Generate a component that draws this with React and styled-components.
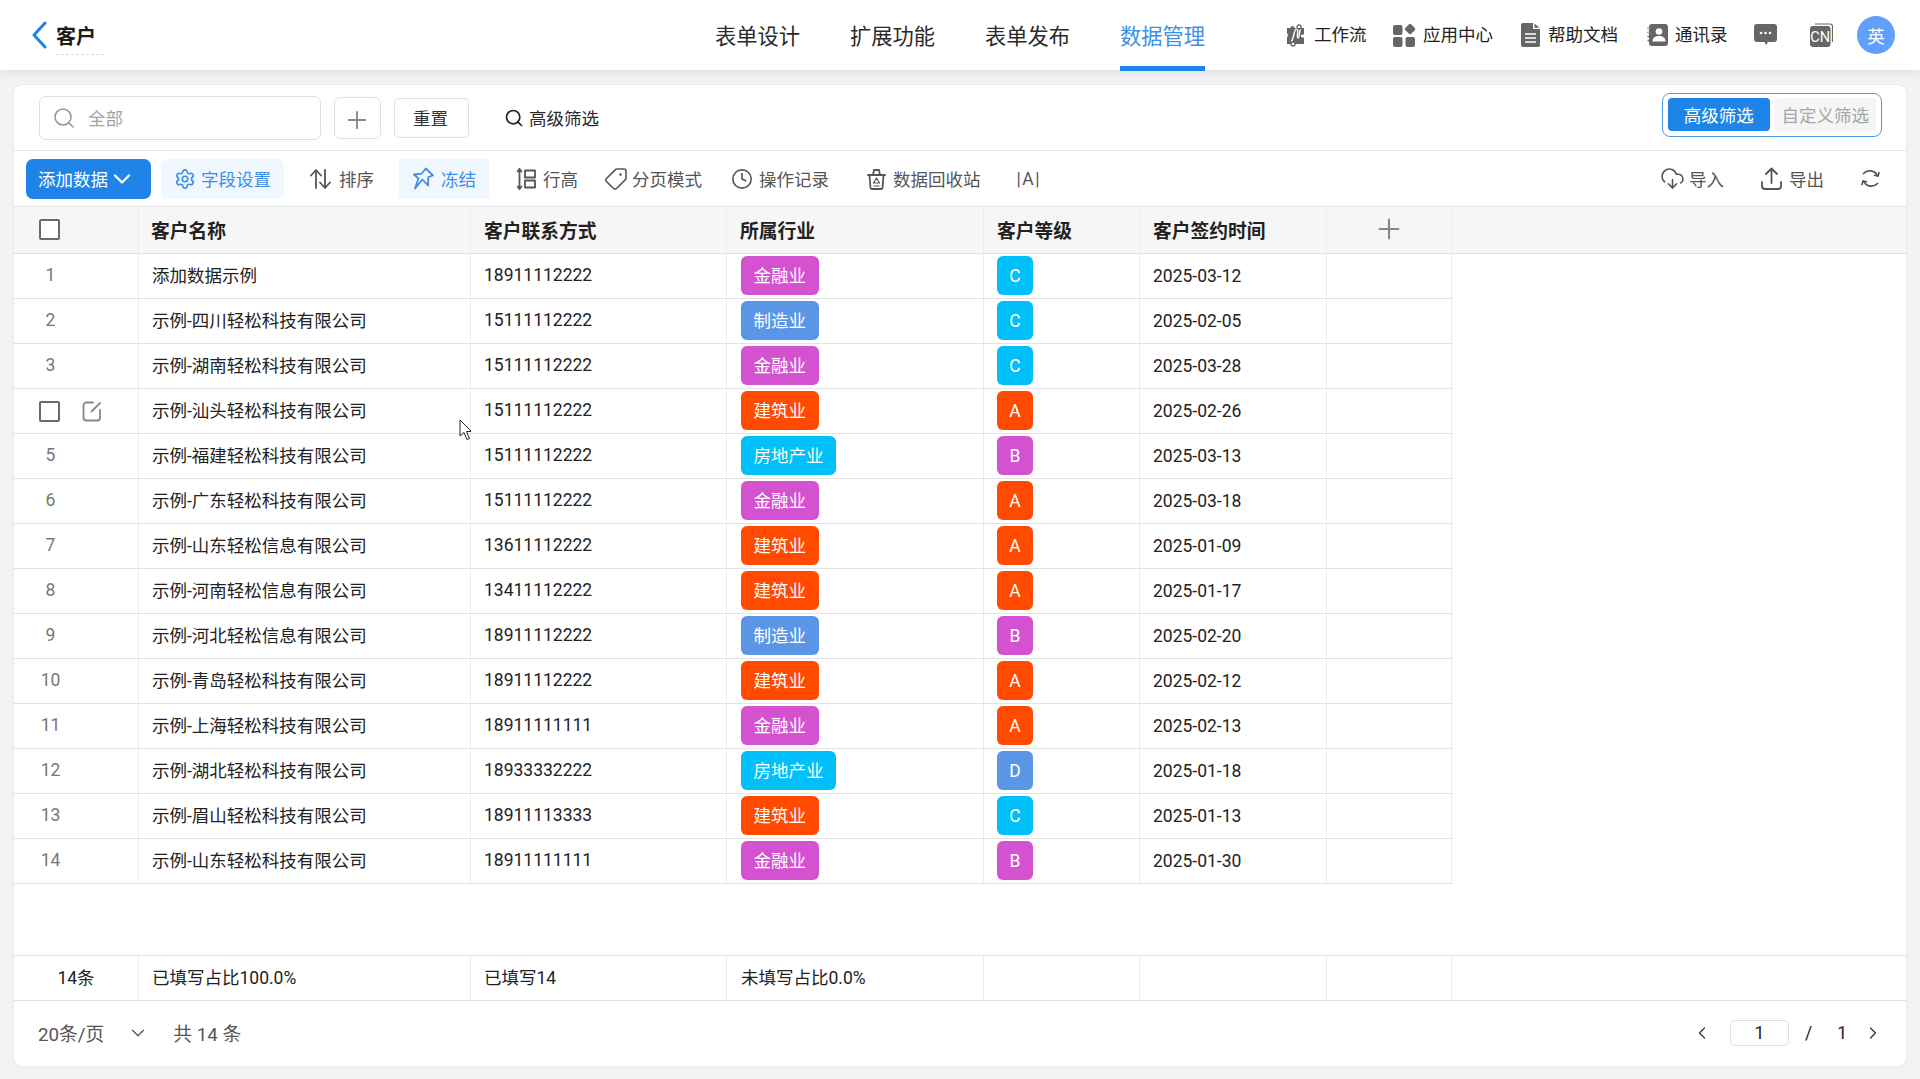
import React from 'react';
import styled, { createGlobalStyle, css } from 'styled-components';
import { ChevronLeft, ChevronRight, ChevronDown, Search, Plus, Settings, Tag, Clock, CloudDownload } from 'lucide-react';

const Global = createGlobalStyle`
  * { box-sizing: border-box; }
  html, body { margin: 0; padding: 0; height: 100%; }
  body { font-family: Roboto, "Noto Sans CJK SC", sans-serif; font-size: 17.5px; color: #222; background: #f2f3f3; overflow: hidden; }
`;

const Page = styled.div`
  position: relative;
  height: 100vh;
  display: flex;
  flex-direction: column;
`;

const Header = styled.header`
  height: 70px;
  flex: none;
  background: #fff;
  display: flex;
  align-items: center;
  box-shadow: 0 2px 10px rgba(60, 70, 80, 0.12);
  position: relative;
  z-index: 2;
`;

const TitleArea = styled.div`
  width: 715px;
  flex: none;
  padding-left: 31px;
  display: flex;
  align-items: center;
  gap: 9px;
`;

const Title = styled.span`
  font-size: 20px;
  font-weight: 700;
  color: #1c1c1c;
  width: 48px;
  height: 36px;
  line-height: 36px;
  margin-top: 4px;
  border-bottom: 1px dashed #ddd;
`;

const Tabs = styled.nav`
  display: flex;
  gap: 50px;
  height: 70px;
  flex: none;
`;

const TabItem = styled.a`
  position: relative;
  font-size: 21.25px;
  line-height: 74px;
  height: 71px;
  color: ${p => (p.$active ? '#3d8fe8' : '#2a2a2a')};
  border-bottom: ${p => (p.$active ? '5px solid #1e84e8' : '0')};
`;

const NavRight = styled.div`
  margin-left: 81px;
  display: flex;
  align-items: center;
  height: 70px;
`;

const NavLink = styled.div`
  display: flex;
  align-items: center;
  gap: ${p => p.$gap || 8}px;
  margin-right: ${p => p.$mr || 0}px;
  color: #222;
  font-size: 17.5px;
  line-height: 24px;
`;

const Avatar = styled.div`
  width: 38px;
  height: 38px;
  margin-left: 24px;
  border-radius: 50%;
  background: #609ffb;
  color: #fff;
  display: flex;
  align-items: center;
  justify-content: center;
  font-size: 17.5px;
`;

const Card = styled.main`
  flex: 1;
  min-height: 0;
  margin: 14px 13px 12px 13px;
  background: #fff;
  border: 1px solid #e8e9ea;
  border-radius: 9px;
  display: flex;
  flex-direction: column;
  overflow: hidden;
`;

const FilterRow = styled.div`
  height: 66px;
  flex: none;
  border-bottom: 1px solid #e6e6e6;
  display: flex;
  align-items: center;
  padding: 0 24px 0 25px;
`;

const SearchBox = styled.div`
  width: 282px;
  height: 44px;
  border: 1px solid #dcdfe6;
  border-radius: 7px;
  display: flex;
  align-items: center;
  padding-left: 12px;
  gap: 12px;
  color: #a3a3a3;
  font-size: 17.5px;
`;

const SquareBtn = styled.button`
  width: 47px;
  height: 42px;
  margin-left: 13px;
  background: #fff;
  border: 1px solid #dcdfe6;
  border-radius: 6px;
  display: flex;
  align-items: center;
  justify-content: center;
  color: #888;
  padding: 4px 1px 0 0;
`;

const ResetBtn = styled.button`
  width: 75px;
  height: 40px;
  margin-left: 13px;
  background: #fff;
  border: 1px solid #dcdfe6;
  border-radius: 5px;
  font: inherit;
  color: #333;
  padding: 0 2px 0 0;
`;

const AdvLink = styled.div`
  margin-left: 35px;
  display: flex;
  align-items: center;
  gap: 5px;
  color: #2a2a2a;
`;

const FilterSwitch = styled.div`
  margin-left: auto;
  margin-top: -6px;
  width: 220px;
  height: 44px;
  border: 1px solid #4a9bea;
  border-radius: 8px;
  display: flex;
  align-items: center;
  gap: 5px;
  padding: 0 5px;
`;

const SwitchItem = styled.div`
  flex: 1;
  height: 33px;
  border-radius: 4px;
  display: flex;
  align-items: center;
  justify-content: center;
  background: ${p => (p.$active ? '#1e84e8' : '#f5f5f5')};
  color: ${p => (p.$active ? '#fff' : '#a6a6a6')};
`;

const Toolbar = styled.div`
  height: 56px;
  flex: none;
  border-bottom: 1px solid #e6e6e6;
  display: flex;
  align-items: center;
  padding: 0 25px 0 12px;
`;

const AddBtn = styled.button`
  width: 125px;
  height: 40px;
  border: 0;
  border-radius: 7px;
  background: #1e84e8;
  color: #fff;
  font: inherit;
  display: flex;
  align-items: center;
  padding: 0 0 0 12px;
`;

const ToolItem = styled.div`
  height: 40px;
  padding: 0 ${p => p.$pr ?? 14}px 0 ${p => p.$pl ?? 14}px;
  margin-left: ${p => p.$ml || 0}px;
  display: flex;
  align-items: center;
  gap: ${p => p.$gap || 7}px;
  color: ${p => (p.$on ? '#3d8fe8' : '#555')};
  background: ${p => (p.$on ? '#f0f7ff' : 'transparent')};
  border-radius: ${p => p.$radius || 0}px;
`;

const Spaced = styled.span`
  letter-spacing: 1.5px;
`;

const ToolRight = styled.div`
  margin-left: auto;
  display: flex;
  align-items: center;
`;

const RightItem = styled.div`
  display: flex;
  align-items: center;
  gap: ${p => p.$gap || 5}px;
  margin-left: ${p => p.$ml || 0}px;
  color: #555;
`;

const colTemplate = css`
  display: grid;
  grid-template-columns: 125px 332px 256px 257px 156px 187px 125px;
`;

const HeadRow = styled.div`
  ${colTemplate}
  flex: none;
  height: 47px;
  background: #f6f6f6;
  border-bottom: 1px solid #e2e2e2;
`;

const Cell = styled.div`
  display: flex;
  align-items: center;
  padding-left: ${p => p.$pad ?? 13}px;
  padding-bottom: ${p => p.$up || 0}px;
  border-right: 1px solid #ececec;
  min-width: 0;
`;

const HeadCell = styled(Cell)`
  padding-bottom: 2px;
  font-size: 18.75px;
  font-weight: 700;
  color: #222;
`;

const AddCell = styled(Cell)`
  justify-content: center;
  padding-left: 0;
  padding-bottom: 2px;
  color: #888;
`;

const Body = styled.div`
  flex: 1;
  min-height: 0;
`;

const Row = styled.div`
  ${colTemplate}
  width: 1438px;
  height: 45px;
  border-bottom: 1px solid #e2e2e2;
`;

const IndexCell = styled(Cell)`
  padding: 0 51px 2px 0;
  justify-content: center;
  color: #777;
`;

const HoverCell = styled(Cell)`
  padding-left: 25px;
  gap: 22px;
  color: #888;
`;

const Check = styled.span`
  width: 21px;
  height: 21px;
  display: block;
  flex: none;
  border: 2px solid #6a6a6a;
  border-radius: 2px;
  background: #fff;
`;

const Badge = styled.span`
  height: 39px;
  min-width: ${p => (p.$small ? '36px' : '0')};
  padding: 0 ${p => (p.$small ? 0 : 12.5)}px ${p => (p.$small ? 0 : 2)}px;
  border-radius: 6px;
  color: #fff;
  background: ${p => p.$bg};
  display: inline-flex;
  align-items: center;
  justify-content: center;
`;

const SummaryRow = styled.div`
  ${colTemplate}
  flex: none;
  height: 46px;
  border-top: 1px solid #e2e2e2;
  border-bottom: 1px solid #e2e2e2;
  color: #222;
`;

const SummaryCount = styled(Cell)`
  padding-left: 0;
  padding-bottom: 3px;
  justify-content: center;
`;

const Pager = styled.footer`
  flex: none;
  height: 65px;
  display: flex;
  align-items: center;
  padding: 0 23px 2px 24px;
  color: #555;
  font-size: 18.75px;
`;

const PageSize = styled.div`
  display: flex;
  align-items: center;
  gap: 23px;
  margin-right: 24px;
`;

const PagerRight = styled.div`
  margin-left: auto;
  display: flex;
  align-items: center;
  color: #333;
  font-size: 17.5px;
`;

const PageInput = styled.div`
  width: 59px;
  height: 26px;
  margin: 0 16px 0 18px;
  border: 1px solid #dcdfe6;
  border-radius: 5px;
  display: flex;
  align-items: center;
  justify-content: center;
  color: #222;
`;

const PageNum = styled.span`
  color: #222;
  margin: ${p => p.$m};
`;

const Cursor = styled.svg`
  position: absolute;
  left: 459px;
  top: 419px;
  z-index: 5;
`;

const Ico = ({ s = 20, children, vb = '0 0 24 24', w, h }) => (
  <svg width={w || s} height={h || s} viewBox={vb} fill="none" stroke="currentColor" strokeWidth="1.8" strokeLinecap="round" strokeLinejoin="round">{children}</svg>
);

const G = '#666';

const BackIcon = () => (
  <svg width="16" height="28" viewBox="0 0 16 28" fill="none" stroke="#1e84e8" strokeWidth="3" strokeLinecap="round" strokeLinejoin="round"><path d="M14 2L3 14l11 12" /></svg>
);
const WorkflowIcon = () => (
  <svg width="19" height="24" viewBox="0 0 19 24">
    <path d="M1 5h3.5a2 2 0 0 1 4 0H18v6.5h-1.5a1.5 1.5 0 0 0 0 3H18V21H9a2 2 0 0 1-4 0H1v-7a2 2 0 0 0 0-3.5z" fill={G} />
    <path d="M5 18c3 0 2.500-12 5.500-12S10 15 12 15s1-9 3-9" fill="none" stroke="#fff" strokeWidth="1.4" />
    <circle cx="7" cy="21" r="2" fill="#fff" stroke={G} strokeWidth="1.3" />
    <circle cx="13" cy="4" r="2" fill="#fff" stroke={G} strokeWidth="1.3" />
  </svg>
);
const AppsIcon = () => (
  <svg width="24" height="24" viewBox="0 0 24 24">
    <rect x="1" y="2" width="9.500" height="10" rx="2" fill={G} />
    <rect x="1" y="14" width="9.500" height="10" rx="2" fill={G} />
    <rect x="13.500" y="14" width="9.500" height="10" rx="2" fill={G} />
    <rect x="14" y="2" width="8.200" height="8.200" rx="1.500" transform="rotate(45 18.100 6.100)" fill={G} />
  </svg>
);
const DocIcon = () => (
  <svg width="19" height="24" viewBox="0 0 19 24">
    <path d="M2 0h10v6h7v16a2 2 0 0 1-2 2H2a2 2 0 0 1-2-2V2a2 2 0 0 1 2-2z" fill={G} />
    <path d="M13.500 0.500L18.500 4.700H13.500z" fill={G} />
    <path d="M4 11h11M4 15h11M4 19h11" stroke="#fff" strokeWidth="1.6" />
  </svg>
);
const ContactIcon = () => (
  <svg width="21" height="24" viewBox="0 0 21 24">
    <rect x="2" y="1" width="19" height="22" rx="3" fill={G} />
    <path d="M0.500 5.500h3M0.500 9.500h3M0.500 13.500h3M0.500 17.500h3" stroke={G} strokeWidth="1.500" />
    <path d="M0.800 5.500h2M0.800 9.500h2" stroke="#fff" strokeWidth="0.500" />
    <circle cx="12" cy="8.500" r="3.300" fill="#fff" />
    <path d="M5.500 18.500c0-4 3-5.500 6.500-5.500s6.500 1.500 6.500 5.500z" fill="#fff" />
  </svg>
);
const MsgIcon = () => (
  <svg width="23" height="22" viewBox="0 0 23 22">
    <path d="M3 0h17a3 3 0 0 1 3 3v12a3 3 0 0 1-3 3h-6l-2 3-1.500-3H3a3 3 0 0 1-3-3V3a3 3 0 0 1 3-3z" fill={G} />
    <circle cx="7" cy="9" r="1.300" fill="#fff" />
    <circle cx="11.500" cy="9" r="1.300" fill="#fff" />
    <circle cx="16" cy="9" r="1.300" fill="#fff" />
  </svg>
);
const CnIcon = () => (
  <svg width="23" height="24" viewBox="0 0 23 24">
    <path d="M5 1h15a2.500 2.500 0 0 1 2.500 2.500V19" fill="none" stroke={G} strokeWidth="1.200" />
    <rect x="0" y="3" width="20.500" height="21" rx="3" fill={G} />
    <text x="10.200" y="19" textAnchor="middle" fontSize="14.500" fontFamily="Roboto, sans-serif" fill="#fff">CN</text>
  </svg>
);
const SortIcon = () => (
  <Ico w={23} h={22} vb="0 0 23 22"><path d="M7 20V2.500M2 7.500l5-5.500 5 5.500" /><path d="M16 2v17.500M11 14.500l5 5.500 5-5.500" /></Ico>
);
const PinIcon = () => (
  <Ico w={21} h={23} vb="0 0 21 23"><path d="M12.800 1.500L20 8.500l-4.700 1.500-.3 8.500-5.500-6-7.500 9 3.500-10L1 7.500l7.500-.8z" /></Ico>
);
const LineHeightIcon = () => (
  <Ico w={19} h={24} vb="0 0 19 24"><path d="M2.500 2v20M0.500 4.500l2-2.500 2 2.500M0.500 19.500l2 2.500 2-2.500" /><rect x="8" y="3.500" width="10" height="7" /><rect x="8" y="13.500" width="10" height="7" /></Ico>
);
const BinIcon = () => (
  <Ico w={19} h={22} vb="0 0 19 22"><path d="M1 7h17M6 7l1-5h5l1 5" /><path d="M2.500 7l1 13a1.500 1.500 0 0 0 1.500 1h9a1.500 1.500 0 0 0 1.500-1l1-13" /><path d="M9.500 10l-3 5h6zM7 18h5" strokeWidth="1.200" /></Ico>
);
const UploadIcon = () => (
  <Ico w={21} h={23} vb="0 0 21 23"><path d="M10.500 16V2M5 7l5.500-5.500L16 7" /><path d="M1 15v4a3 3 0 0 0 3 3h13a3 3 0 0 0 3-3v-4" /></Ico>
);
const RefreshIcon = () => (
  <Ico w={21} h={21} vb="0 0 21 21"><path d="M3.500 5.500a8.500 8.500 0 0 1 14 2.500" /><path d="M17.500 15.500a8.500 8.500 0 0 1-14-2.500" /><path d="M19 4.500L18 8l-3.500-.8M2 16.500L3 13l3.500.8" strokeWidth="1.600" /></Ico>
);
const EditIcon = () => (
  <Ico w={20} h={22} vb="0 0 20 22"><path d="M11 2.500H4.500a3 3 0 0 0-3 3v12a3 3 0 0 0 3 3h10.500a3 3 0 0 0 3-3V10" /><path d="M9.500 11.500L18 3" /></Ico>
);

const IND = {
  金融业: '#d452cf',
  制造业: '#5b96e6',
  建筑业: '#ff4a00',
  房地产业: '#00bff9',
};
const LVL = { A: '#ff4a00', B: '#d452cf', C: '#00bff9', D: '#5b96e6' };

const rows = [
  ['添加数据示例', '18911112222', '金融业', 'C', '2025-03-12'],
  ['示例-四川轻松科技有限公司', '15111112222', '制造业', 'C', '2025-02-05'],
  ['示例-湖南轻松科技有限公司', '15111112222', '金融业', 'C', '2025-03-28'],
  ['示例-汕头轻松科技有限公司', '15111112222', '建筑业', 'A', '2025-02-26'],
  ['示例-福建轻松科技有限公司', '15111112222', '房地产业', 'B', '2025-03-13'],
  ['示例-广东轻松科技有限公司', '15111112222', '金融业', 'A', '2025-03-18'],
  ['示例-山东轻松信息有限公司', '13611112222', '建筑业', 'A', '2025-01-09'],
  ['示例-河南轻松信息有限公司', '13411112222', '建筑业', 'A', '2025-01-17'],
  ['示例-河北轻松信息有限公司', '18911112222', '制造业', 'B', '2025-02-20'],
  ['示例-青岛轻松科技有限公司', '18911112222', '建筑业', 'A', '2025-02-12'],
  ['示例-上海轻松科技有限公司', '18911111111', '金融业', 'A', '2025-02-13'],
  ['示例-湖北轻松科技有限公司', '18933332222', '房地产业', 'D', '2025-01-18'],
  ['示例-眉山轻松科技有限公司', '18911113333', '建筑业', 'C', '2025-01-13'],
  ['示例-山东轻松科技有限公司', '18911111111', '金融业', 'B', '2025-01-30'],
];

export default function App() {
  return (
    <Page>
      <Global />
      <Header>
        <TitleArea>
          <BackIcon />
          <Title>客户</Title>
        </TitleArea>
        <Tabs>
          <TabItem>表单设计</TabItem>
          <TabItem>扩展功能</TabItem>
          <TabItem>表单发布</TabItem>
          <TabItem $active>数据管理</TabItem>
        </Tabs>
        <NavRight>
          <NavLink $mr={25.5} $gap={9}><WorkflowIcon />工作流</NavLink>
          <NavLink $mr={28} $gap={7}><AppsIcon />应用中心</NavLink>
          <NavLink $mr={29}><DocIcon />帮助文档</NavLink>
          <NavLink $mr={26.5} $gap={7}><ContactIcon />通讯录</NavLink>
          <NavLink $mr={33}><MsgIcon /></NavLink>
          <NavLink><CnIcon /></NavLink>
          <Avatar>英</Avatar>
        </NavRight>
      </Header>
      <Card>
        <FilterRow>
          <SearchBox><Search size={24} color="#999" strokeWidth={1.6} />全部</SearchBox>
          <SquareBtn><Plus size={28} strokeWidth={1.6} /></SquareBtn>
          <ResetBtn>重置</ResetBtn>
          <AdvLink><Search size={20} color="#222" strokeWidth={2} />高级筛选</AdvLink>
          <FilterSwitch>
            <SwitchItem $active>高级筛选</SwitchItem>
            <SwitchItem>自定义筛选</SwitchItem>
          </FilterSwitch>
        </FilterRow>
        <Toolbar>
          <AddBtn>添加数据<ChevronDown size={28} strokeWidth={2} /></AddBtn>
          <ToolItem $ml={10} $on $radius={7} $pl={13} $pr={13} $gap={5}><Settings size={22} strokeWidth={1.8} />字段设置</ToolItem>
          <ToolItem $ml={11}><SortIcon />排序</ToolItem>
          <ToolItem $ml={11} $on $pr={13}><PinIcon />冻结</ToolItem>
          <ToolItem $ml={14}><LineHeightIcon />行高</ToolItem>
          <ToolItem $gap={4} $pl={12} $pr={16}><Tag size={24} strokeWidth={1.6} style={{ transform: 'scaleX(-1)' }} />分页模式</ToolItem>
          <ToolItem $gap={6} $pl={13}><Clock size={22} strokeWidth={1.8} />操作记录</ToolItem>
          <ToolItem $ml={10} $gap={7}><BinIcon />数据回收站</ToolItem>
          <ToolItem $ml={8}><Spaced>|A|</Spaced></ToolItem>
          <ToolRight>
            <RightItem $gap={4}><CloudDownload size={25} strokeWidth={1.5} />导入</RightItem>
            <RightItem $ml={37} $gap={7}><UploadIcon />导出</RightItem>
            <RightItem $ml={36}><RefreshIcon /></RightItem>
          </ToolRight>
        </Toolbar>
        <HeadRow>
          <HeadCell $pad={25}><Check /></HeadCell>
          <HeadCell $pad={12}>客户名称</HeadCell>
          <HeadCell $pad={13}>客户联系方式</HeadCell>
          <HeadCell $pad={13}>所属行业</HeadCell>
          <HeadCell $pad={13}>客户等级</HeadCell>
          <HeadCell $pad={13}>客户签约时间</HeadCell>
          <AddCell><Plus size={32} strokeWidth={1.6} /></AddCell>
        </HeadRow>
        <Body>
          {rows.map((r, i) => (
            <Row key={i}>
              {i === 3 ? (
                <HoverCell><Check /><EditIcon /></HoverCell>
              ) : (
                <IndexCell>{i + 1}</IndexCell>
              )}
              <Cell $pad={13} $up={4}>{r[0]}</Cell>
              <Cell $up={2}>{r[1]}</Cell>
              <Cell $pad={14} $up={1}><Badge $bg={IND[r[2]]}>{r[2]}</Badge></Cell>
              <Cell $pad={13} $up={1}><Badge $small $bg={LVL[r[3]]}>{r[3]}</Badge></Cell>
              <Cell $pad={13}>{r[4]}</Cell>
              <Cell />
            </Row>
          ))}
        </Body>
        <SummaryRow>
          <SummaryCount>14条</SummaryCount>
          <Cell $pad={13} $up={3}>已填写占比100.0%</Cell>
          <Cell $up={3}>已填写14</Cell>
          <Cell $pad={14} $up={3}>未填写占比0.0%</Cell>
          <Cell />
          <Cell />
          <Cell />
        </SummaryRow>
        <Pager>
          <PageSize>20条/页<ChevronDown size={22} strokeWidth={1.4} /></PageSize>
          <span>共 14 条</span>
          <PagerRight>
            <ChevronLeft size={20} strokeWidth={1.5} />
            <PageInput>1</PageInput>
            <PageNum>/</PageNum>
            <PageNum $m="0 16px 0 25px">1</PageNum>
            <ChevronRight size={20} strokeWidth={1.5} />
          </PagerRight>
        </Pager>
      </Card>
      <Cursor width="12" height="22" viewBox="0 0 12 22">
        <path d="M1 1v16l4-3.500 3 7 2.500-1-3-7h5z" fill="#fff" stroke="#222" strokeWidth="1" strokeLinejoin="round" />
      </Cursor>
    </Page>
  );
}
